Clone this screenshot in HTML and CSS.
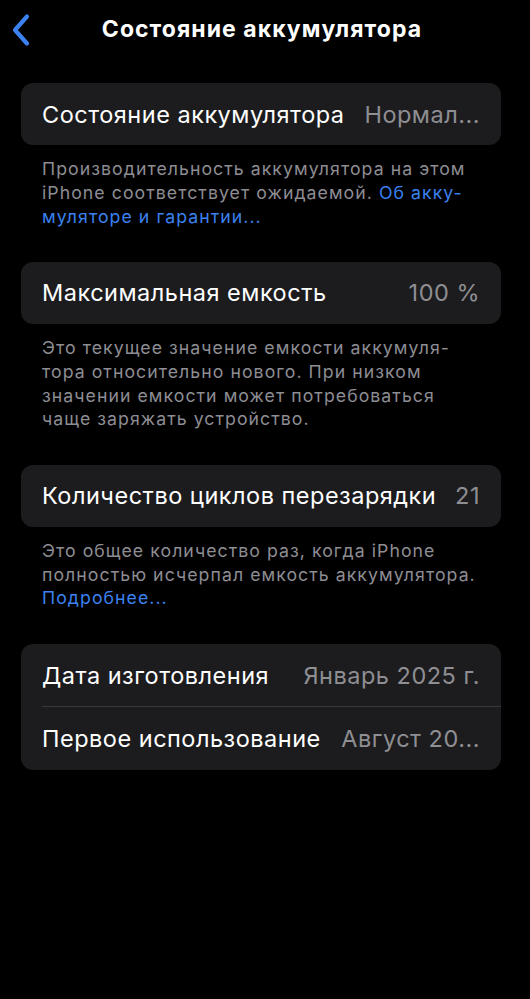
FILE: index.html
```html
<!DOCTYPE html>
<html lang="ru">
<head>
<meta charset="utf-8">
<title>Состояние аккумулятора</title>
<link rel="stylesheet" href="styles.css">
</head>
<body>
<header class="nav">
  <svg class="back" width="40" height="60" viewBox="0 0 40 60" aria-hidden="true">
    <path d="M27 16.5 L15 30 L27 43.5" fill="none" stroke="#3b82f0" stroke-width="4.2" stroke-linecap="round" stroke-linejoin="round"/>
  </svg>
  <h1 class="title">Состояние аккумулятора</h1>
</header>
<main class="content">
  <section class="group">
    <div class="card">
      <div class="row"><span class="label">Состояние аккумулятора</span><span class="value">Нормал...</span></div>
    </div>
    <p class="footer">Производительность аккумулятора на этом<br>iPhone соответствует ожидаемой. <span class="link">Об акку-<br>муляторе и гарантии...</span></p>
  </section>
  <section class="group">
    <div class="card">
      <div class="row"><span class="label">Максимальная емкость</span><span class="value">100 %</span></div>
    </div>
    <p class="footer">Это текущее значение емкости аккумуля-<br>тора относительно нового. При низком<br>значении емкости может потребоваться<br>чаще заряжать устройство.</p>
  </section>
  <section class="group">
    <div class="card">
      <div class="row"><span class="label">Количество циклов перезарядки</span><span class="value">21</span></div>
    </div>
    <p class="footer">Это общее количество раз, когда iPhone<br>полностью исчерпал емкость аккумулятора.<br><span class="link">Подробнее...</span></p>
  </section>
  <section class="group">
    <div class="card">
      <div class="row row-tall"><span class="label">Дата изготовления</span><span class="value">Январь 2025 г.</span></div>
      <div class="divider"></div>
      <div class="row row-tall"><span class="label">Первое использование</span><span class="value">Август 20...</span></div>
    </div>
  </section>
</main>
</body>
</html>
```
FILE: styles.css
```css
html, body {
  margin: 0;
  padding: 0;
  background: #000;
}
body {
  font-family: Inter, "Noto Sans", sans-serif;
  color: #fff;
  width: 530px;
  min-height: 999px;
}
.nav {
  position: relative;
  height: 62px;
  display: flex;
  align-items: center;
  justify-content: center;
}
.back {
  position: absolute;
  left: 0;
  top: 0;
}
.title {
  margin: -4px 0 0 -6px;
  font-size: 23px;
  font-weight: 700;
  letter-spacing: 1.05px;
}
.content {
  padding: 21px 29px 0 21px;
}
.group {
  margin-bottom: 33.6px;
}
.card {
  background: #1c1c1e;
  border-radius: 12px;
  width: 480px;
}
.row {
  height: 62px;
  display: flex;
  align-items: center;
  justify-content: space-between;
  padding: 0 21px;
  font-size: 23.5px;
  letter-spacing: 0.5px;
}
.row-tall {
  height: 62.5px;
}
.label {
  color: #fff;
  white-space: nowrap;
}
.value {
  color: #8e8e93;
  white-space: nowrap;
  margin-left: 12px;
}
.divider {
  height: 1px;
  background: #38383a;
  margin-left: 21px;
}
.footer {
  margin: 0;
  padding: 12px 21px 0 21px;
  font-size: 17.7px;
  line-height: 23.8px;
  color: #8d8d93;
  letter-spacing: 1.05px;
  white-space: nowrap;
}
.link {
  color: #3b82f0;
}
```
